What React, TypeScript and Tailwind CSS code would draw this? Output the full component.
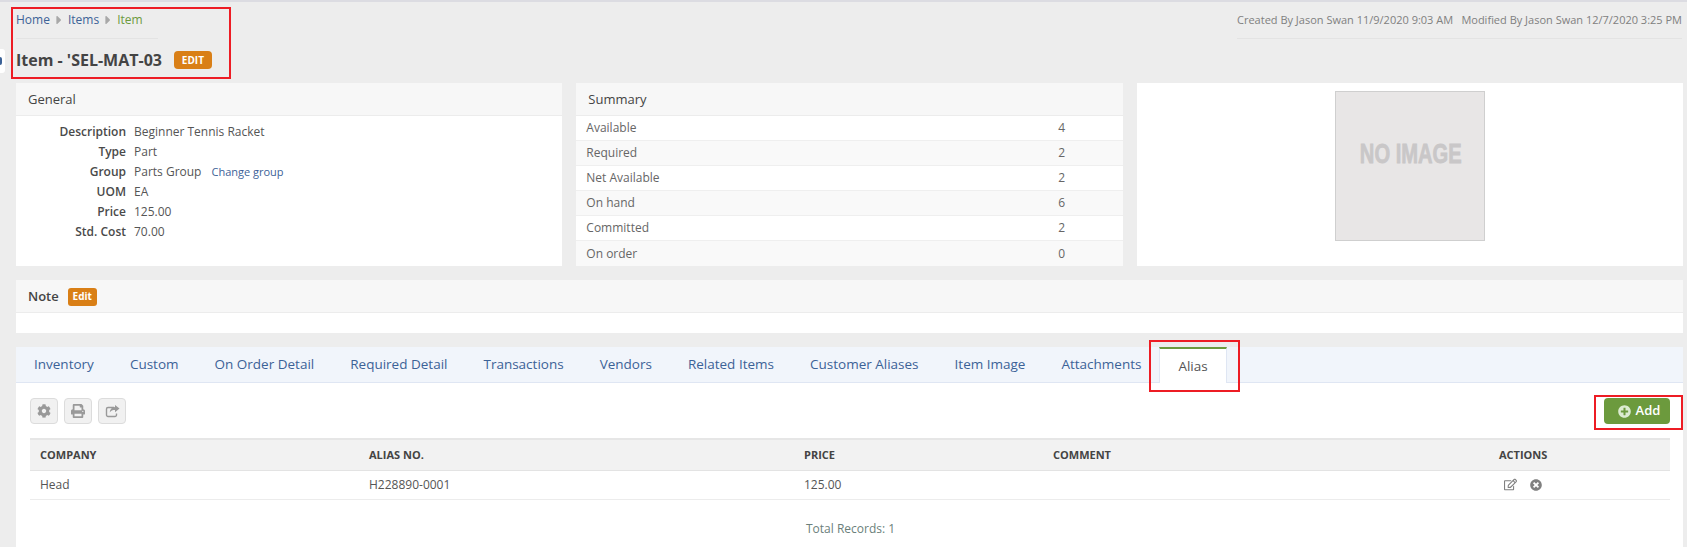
import { FaCog, FaPrint, FaRegEdit, FaTimesCircle, FaPlusCircle, FaCaretRight } from "react-icons/fa";

const general: [string, string][] = [
  ["Description", "Beginner Tennis Racket"],
  ["Type", "Part"],
  ["Group", "Parts Group"],
  ["UOM", "EA"],
  ["Price", "125.00"],
  ["Std. Cost", "70.00"],
];
const summary: [string, string][] = [
  ["Available", "4"],
  ["Required", "2"],
  ["Net Available", "2"],
  ["On hand", "6"],
  ["Committed", "2"],
  ["On order", "0"],
];
const tabs = ["Inventory", "Custom", "On Order Detail", "Required Detail", "Transactions", "Vendors", "Related Items", "Customer Aliases", "Item Image", "Attachments"];

function PanelHead({ children }: { children: React.ReactNode }) {
  return (
    <div className="flex items-center h-[33px] pl-3 pt-[1px] bg-[#f7f7f7] border-b border-[#ececec] text-[13px] font-medium text-[#444]">
      {children}
    </div>
  );
}

function Crumb() {
  return <FaCaretRight className="shrink-0 text-[#a8a8a8] text-[14px] mx-[2px]" />;
}

function ToolButton({ children }: { children: React.ReactNode }) {
  return (
    <button className="flex items-center justify-center w-[28px] h-[26px] rounded-[4px] bg-[#f1f1f1] border border-[#dcdcdc] text-[#999] text-[14px]">
      {children}
    </button>
  );
}

function ShareIcon() {
  return (
    <svg width="15" height="14" viewBox="0 0 15 14" fill="none">
      <path d="M9 3.5H3a1.5 1.5 0 0 0-1.5 1.5v6A1.5 1.5 0 0 0 3 12.5h7a1.5 1.5 0 0 0 1.5-1.5V9.5" stroke="currentColor" strokeWidth="1.4" />
      <path d="M10 1l4.5 3.6L10 8.2V6C7.6 6 6 6.6 4.8 8.6 5 5.4 7 3.2 10 3.1V1z" fill="currentColor" />
    </svg>
  );
}

export default function App() {
  return (
    <div className="relative w-[1687px] h-[547px] overflow-hidden bg-[#ededed] border-t-2 border-[#dcdce2] pl-4 pr-1 font-['Open_Sans',sans-serif] text-[12px] text-[#555]">
      <div className="absolute left-0 top-[47px] w-[5px] h-[24px] bg-white rounded-r-[3px] flex items-center overflow-hidden">
        <span className="block w-[2px] h-[8px] bg-[#3c6297] rounded-r-[2px]" />
      </div>

      <div className="flex justify-between h-[81px]">
        <div className="w-[142px]">
          <div className="flex items-center h-[37px] border-b border-[#e3e3e3] text-[12px] whitespace-nowrap">
            <span className="text-[#3c6297]">Home</span>
            <Crumb />
            <span className="text-[#3c6297]">Items</span>
            <Crumb />
            <span className="text-[#6c9a3d]">Item</span>
          </div>
          <div className="flex items-center h-[42px] whitespace-nowrap">
            <span className="text-[16px] font-bold text-[#444]">Item - 'SEL-MAT-03</span>
            <span className="ml-3 shrink-0 flex items-center justify-center w-[38px] h-[18px] rounded-[4px] bg-[#d97f16] text-white text-[10px] font-bold">EDIT</span>
          </div>
        </div>
        <div className="w-[445px] mr-[1px]">
          <div className="flex items-center justify-between h-[37px] border-b border-[#e3e3e3] text-[11px] text-[#808080] whitespace-nowrap">
            <span>Created By Jason Swan 11/9/2020 9:03 AM</span>
            <span>Modified By Jason Swan 12/7/2020 3:25 PM</span>
          </div>
        </div>
      </div>

      <div className="grid grid-cols-3 gap-[14px] h-[183px]">
        <div className="bg-white">
          <PanelHead>General</PanelHead>
          <div className="pt-[6px]">
            {general.map(([label, value]) => (
              <div key={label} className="flex items-center h-[20px]">
                <span className="w-[110px] text-right font-semibold text-[#4a4a4a]">{label}</span>
                <span className="ml-2 text-[#555]">{value}</span>
                {label === "Group" && <span className="ml-[10px] text-[11px] text-[#3c6297]">Change group</span>}
              </div>
            ))}
          </div>
        </div>
        <div className="bg-white">
          <PanelHead>Summary</PanelHead>
          {summary.map(([label, value], i) => (
            <div key={label} className={`flex items-center h-[25px] pl-[10px] text-[#666] ${i % 2 ? "bg-[#f9f9f9]" : "bg-white"} ${i < 5 ? "border-b border-[#efefef]" : ""}`}>
              <span className="w-[472px]">{label}</span>
              <span>{value}</span>
            </div>
          ))}
        </div>
        <div className="bg-white flex justify-center pt-2">
          <div className="w-[150px] h-[150px] pb-[24px] pl-[2px] bg-[#e8e6e6] border border-[#cfcfcf] flex items-center justify-center overflow-hidden">
            <span className="inline-block shrink-0 scale-x-[0.72] font-['Liberation_Sans',sans-serif] font-bold text-[28px] leading-none text-[#c9c7c8] [-webkit-text-stroke:0.8px_#c9c7c8] whitespace-nowrap">
              NO IMAGE
            </span>
          </div>
        </div>
      </div>

      <div className="mt-[14px] h-[53px] bg-white">
        <PanelHead>
          <span className="font-semibold">Note</span>
          <span className="ml-[9px] flex items-center justify-center w-[29px] h-[18px] rounded-[3px] bg-[#d97f16] text-white text-[10px] font-bold">Edit</span>
        </PanelHead>
      </div>

      <div className="mt-[14px] h-[200px] bg-white">
        <div className="flex h-[36px] bg-[#f1f5fb] border-b border-[#dfe6f3]">
          {tabs.map((t) => (
            <div key={t} className="flex items-center px-[18px] text-[13.5px] font-medium text-[#3c6297] whitespace-nowrap">{t}</div>
          ))}
          <div className="flex items-center h-[36px] px-[18px] bg-white border-t-2 border-t-[#6c9a3d] border-x border-x-[#dfe6f3] text-[13.5px] font-medium text-[#555]">Alias</div>
        </div>

        <div className="pl-[14px] pr-[13px]">
          <div className="flex justify-between items-center pt-[15px]">
            <div className="flex gap-[6px]">
              <ToolButton><FaCog /></ToolButton>
              <ToolButton><FaPrint /></ToolButton>
              <ToolButton><ShareIcon /></ToolButton>
            </div>
            <button className="flex items-center justify-center gap-[5px] w-[66px] h-[26px] pl-[4px] rounded-[4px] bg-[#6c9a3d] text-white text-[13px] font-semibold">
              <FaPlusCircle className="text-[13px] text-[#dcebd0]" />
              Add
            </button>
          </div>

          <table className="mt-[14px] w-[1640px] table-fixed border-collapse text-left">
            <colgroup>
              <col className="w-[329px]" />
              <col className="w-[435px]" />
              <col className="w-[249px]" />
              <col className="w-[446px]" />
              <col className="w-[181px]" />
            </colgroup>
            <thead>
              <tr className="h-[31px] bg-[#f2f2f2] border-t-2 border-[#e6e6e6] border-b border-b-[#e3e3e3] text-[11px] font-bold text-[#444]">
                <th className="pl-[10px]">COMPANY</th>
                <th className="pl-[10px]">ALIAS NO.</th>
                <th className="pl-[10px]">PRICE</th>
                <th className="pl-[10px]">COMMENT</th>
                <th className="pl-[10px]">ACTIONS</th>
              </tr>
            </thead>
            <tbody>
              <tr className="h-[29px] border-b border-[#ececec] text-[#555]">
                <td className="pl-[10px]">Head</td>
                <td className="pl-[10px]">H228890-0001</td>
                <td className="pl-[10px]">125.00</td>
                <td className="pl-[10px]"></td>
                <td className="pl-[15px]">
                  <div className="flex items-center gap-[13px] text-[#808080] text-[13px]">
                    <FaRegEdit />
                    <FaTimesCircle className="text-[#808080] text-[12px]" />
                  </div>
                </td>
              </tr>
            </tbody>
          </table>

          <div className="mt-[20px] pl-[776px] text-[12px] text-[#6b7f7b]">Total Records: 1</div>
        </div>
      </div>

      <div className="absolute left-[11px] top-[5px] w-[220px] h-[72px] border-2 border-[#ed1c24]" />
      <div className="absolute left-[1149px] top-[338px] w-[91px] h-[52px] border-2 border-[#ed1c24]" />
      <div className="absolute left-[1594px] top-[393px] w-[89px] h-[35px] border-2 border-[#ed1c24]" />
    </div>
  );
}
